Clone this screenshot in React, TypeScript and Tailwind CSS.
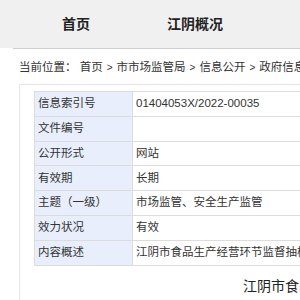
const rows: [string, string][] = [
  ["信息索引号", "01404053X/2022-00035"],
  ["文件编号", ""],
  ["公开形式", "网站"],
  ["有效期", "长期"],
  ["主题（一级）", "市场监管、安全生产监管"],
  ["效力状况", "有效"],
  ["内容概述", "江阴市食品生产经营环节监督抽检信息公告（2022年第9期）"],
];

const font = { fontFamily: '"Liberation Sans", "Noto Sans CJK SC", sans-serif' };

const App = () => {
  return (
    <div className="w-[300px] h-[300px] overflow-hidden bg-white text-[#333]" style={font}>
      <div className="h-[48px] bg-[#f0f0f0] flex items-center w-[300px]">
        <div className="ml-[62px] text-[14px] font-bold text-[#222] whitespace-nowrap">首页</div>
        <div className="ml-[77px] text-[14px] font-bold text-[#222] whitespace-nowrap">江阴概况</div>
      </div>
      <div className="ml-[13px] w-[1000px] border-t border-[#cfcfcf] pl-[6px]">
        <div className="h-[35px] flex items-center text-[11.5px] whitespace-nowrap pt-[2px]">
          当前位置： 首页<span className="mx-[4px] text-[10px]">&gt;</span>市市场监管局
          <span className="mx-[4px] text-[10px]">&gt;</span>信息公开
          <span className="mx-[4px] text-[10px]">&gt;</span>政府信息公开目录
        </div>
        <div className="border border-[#e6e6e6] pt-[6px] pl-[14px] w-[960px]">
          <div className="border border-[#dcdcdc] border-b-0 w-[900px]">
            {rows.map(([label, value]) => (
              <div key={label} className="flex h-[24.8px] border-b border-[#dcdcdc] text-[11.5px]">
                <div className="w-[98px] bg-[#e8eefb] border-r border-[#dcdcdc] pl-[3px] flex items-center whitespace-nowrap">
                  {label}
                </div>
                <div className="flex-1 pl-[3px] flex items-center whitespace-nowrap">{value}</div>
              </div>
            ))}
          </div>
          <div className="pl-[209px] pt-[10px] h-[40px] text-[14px] whitespace-nowrap text-[#222]">
            江阴市食品生产经营环节监督抽检信息公告（2022年第9期）
          </div>
        </div>
      </div>
    </div>
  );
};

export default App;
